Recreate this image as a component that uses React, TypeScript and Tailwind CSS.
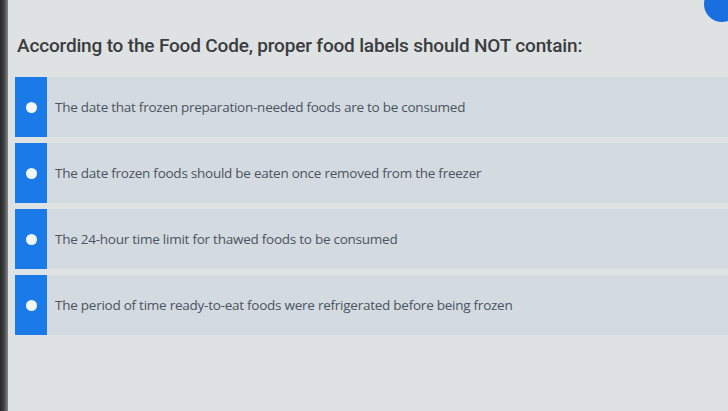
import React from 'react';

const options = [
  'The date that frozen preparation-needed foods are to be consumed',
  'The date frozen foods should be eaten once removed from the freezer',
  'The 24-hour time limit for thawed foods to be consumed',
  'The period of time ready-to-eat foods were refrigerated before being frozen',
];

const App: React.FC = () => {
  return (
    <div className="relative flex h-[411px] w-[728px] overflow-hidden bg-[#dfe2e3]">
      {/* dark screen edge */}
      <div className="w-[8px] shrink-0 bg-gradient-to-r from-[#252628] via-[#414244] to-[#85878a]" />

      <div className="flex-1 pl-[7px]">
        <h1 className="mt-[33px] pl-[2px] font-['Roboto',sans-serif] text-[19px] font-medium leading-[26px] tracking-[-0.17px] text-[#3a3c40]">
          According to the Food Code, proper food labels should NOT contain:
        </h1>

        <div className="mt-[18px] flex flex-col gap-[6px]">
          {options.map((text) => (
            <div key={text} className="flex h-[60px] items-center bg-[#d4dbe0]">
              <div className="flex h-full w-[32px] shrink-0 items-center justify-center bg-[#1a7be8]">
                <span className="block h-[11px] w-[11px] rounded-full bg-[#f4f6f8]" />
              </div>
              <span className="ml-[8px] font-['Open_Sans',sans-serif] text-[13.5px] tracking-[-0.25px] text-[#4a5360]">
                {text}
              </span>
            </div>
          ))}
        </div>
      </div>

      {/* corner button peeking in */}
      <div className="absolute right-[-12px] top-[-14px] h-[36px] w-[36px] rounded-full bg-[#1a6fe0]" />
    </div>
  );
};

export default App;
